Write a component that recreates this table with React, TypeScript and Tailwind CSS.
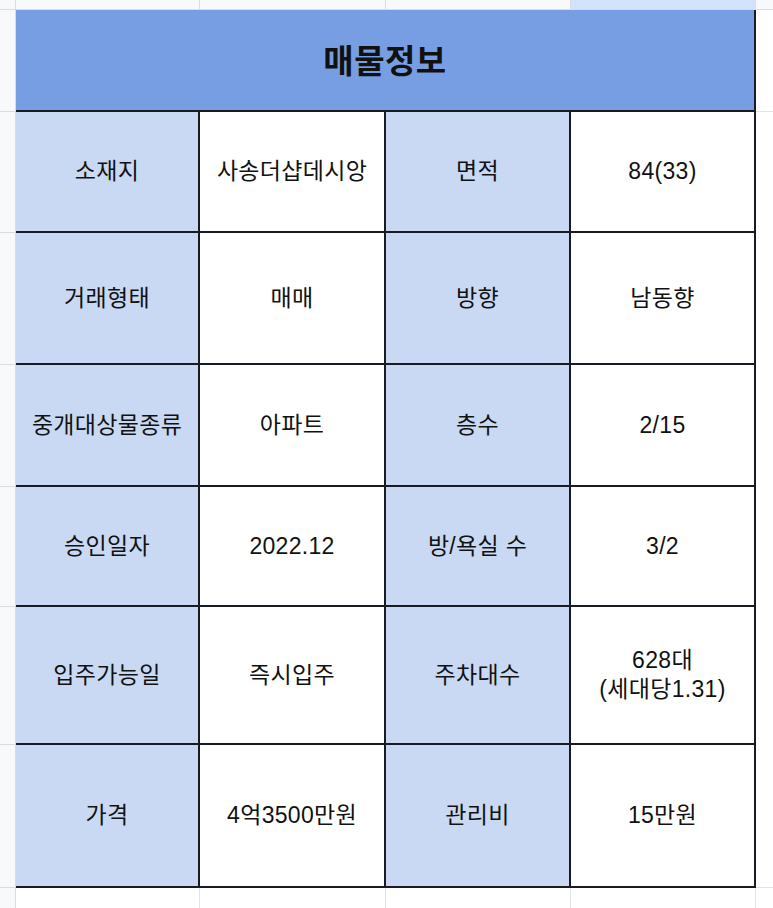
import React from "react";

const rows: { h: string; cells: string[] }[] = [
  { h: "h-[121px]", cells: ["소재지", "사송더샵데시앙", "면적", "84(33)"] },
  { h: "h-[132px]", cells: ["거래형태", "매매", "방향", "남동향"] },
  { h: "h-[122px]", cells: ["중개대상물종류", "아파트", "층수", "2/15"] },
  { h: "h-[120px]", cells: ["승인일자", "2022.12", "방/욕실 수", "3/2"] },
  { h: "h-[138px]", cells: ["입주가능일", "즉시입주", "주차대수", "628대\n(세대당1.31)"] },
  { h: "h-[143px]", cells: ["가격", "4억3500만원", "관리비", "15만원"] },
];

const colW = ["w-[184px]", "w-[186px]", "w-[185px]", "w-[185px]"];

const font = { fontFamily: '"Liberation Sans", "Noto Sans CJK KR", sans-serif' };

const App = () => {
  return (
    <div className="w-[773px] h-[908px] bg-white overflow-hidden text-[#111]" style={font}>
      {/* sheet column headers */}
      <div className="flex h-[10px]">
        <div className="w-[16px] bg-[#f8f9fa] border-r border-b border-[#dadce0]" />
        {colW.map((w, i) => (
          <div
            key={i}
            className={`${w} border-r border-b border-[#dadce0] ${i === 3 ? "bg-[#d3e3fd]" : "bg-[#f8f9fa]"}`}
          />
        ))}
        <div className="flex-1 bg-[#f8f9fa] border-b border-[#dadce0]" />
      </div>

      {/* title row */}
      <div className="flex h-[102px]">
        <div className="w-[16px] bg-[#f8f9fa] border-r border-b border-[#dadce0]" />
        <div className="w-[740px] bg-[#779de3] border-r-2 border-b-2 border-[#1a1b22] flex items-center justify-center pt-[3px]">
          <span className="text-[33px] font-bold tracking-[0.5px]">매물정보</span>
        </div>
        <div className="flex-1 border-b border-[#e3e3e3]" />
      </div>

      {/* body rows */}
      {rows.map((r, ri) => (
        <div key={ri} className={`flex ${r.h}`}>
          <div className="w-[16px] bg-[#f8f9fa] border-r border-b border-[#dadce0]" />
          {r.cells.map((c, ci) => (
            <div
              key={ci}
              className={`${colW[ci]} border-r-2 border-b-2 border-[#1a1b22] flex items-center justify-center text-center text-[23px] leading-[29px] tracking-[0.3px] whitespace-pre-line ${
                ci % 2 === 0 ? "bg-[#c9d9f3]" : "bg-white"
              }`}
            >
              {c}
            </div>
          ))}
          <div className={`flex-1 ${ri === 5 ? "border-b border-[#e3e3e3]" : ""}`} />
        </div>
      ))}

      {/* empty sheet row below */}
      <div className="flex h-[20px]">
        <div className="w-[16px] bg-[#f8f9fa] border-r border-[#dadce0]" />
        {colW.map((w, i) => (
          <div key={i} className={`${w} border-r border-[#e3e3e3]`} />
        ))}
        <div className="flex-1" />
      </div>
    </div>
  );
};

export default App;
